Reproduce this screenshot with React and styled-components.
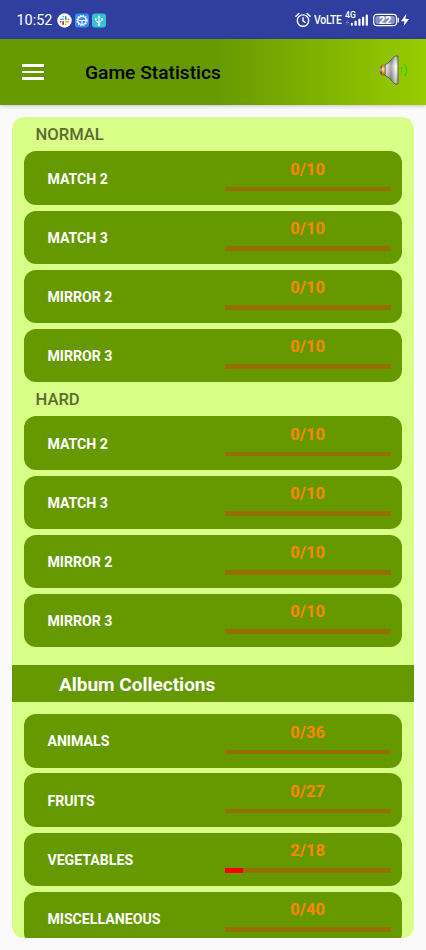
import styled, { createGlobalStyle } from 'styled-components';

const GlobalStyle = createGlobalStyle`
  * {
    box-sizing: border-box;
  }

  body {
    margin: 0;
    background: #fafafa;
    font-family: Roboto, 'Liberation Sans', sans-serif;
  }
`;

const Screen = styled.div`
  display: flex;
  flex-direction: column;
  width: 426px;
  height: 950px;
  overflow: hidden;
`;

const StatusBar = styled.div`
  display: flex;
  flex-shrink: 0;
  align-items: center;
  height: 39px;
  padding: 1px 16px 0;
  color: #fff;
  background: #303f9f;
`;

const Clock = styled.div`
  width: 41px;
  padding-left: 0.5px;
  font-size: 14.4px;
  white-space: nowrap;
`;

const AppIcons = styled.div`
  display: flex;
  gap: 3px;
  margin-right: auto;

  svg {
    display: block;
  }
`;

const SystemIcons = styled.div`
  display: flex;
  align-items: center;

  svg {
    display: block;
  }
`;

const Volte = styled.div`
  width: 31px;
  font-size: 12px;
  font-weight: 500;
  letter-spacing: -0.3px;
  transform: scaleX(0.87);
  transform-origin: left center;
`;

const Header = styled.header`
  position: relative;
  display: flex;
  flex-shrink: 0;
  align-items: center;
  height: 66px;
  padding: 0 15px 0 22px;
  background: linear-gradient(90deg, #669900 50%, #99cc00 100%);
  box-shadow: 0 1px 4px rgba(0, 0, 0, 0.22);
`;

const MenuButton = styled.button`
  display: flex;
  flex-direction: column;
  gap: 3.6px;
  width: 22.4px;
  padding: 0;
  border: 0;
  background: none;
`;

const MenuLine = styled.span`
  height: 2.7px;
  background: #fff;
`;

const HeaderTitle = styled.h1`
  flex: 1;
  margin: 0 0 0 40.6px;
  color: #000;
  font-size: 19.2px;
  font-weight: 500;
`;

const Speaker = styled.div`
  padding-bottom: 4px;

  svg {
    display: block;
  }
`;

const Panel = styled.main`
  flex-shrink: 0;
  width: 402px;
  height: 821px;
  margin: 12px 12px 0;
  padding-top: 0.3px;
  overflow: hidden;
  border-radius: 12px;
  background: #d9ff88;
`;

const GroupTitle = styled.h2`
  height: 34.2px;
  margin: 0;
  padding-left: 23.5px;
  color: #586c2f;
  font-size: 16.6px;
  font-weight: 500;
  line-height: 35px;
`;

const List = styled.div`
  display: flex;
  flex-direction: column;
  gap: 5.917px;
  padding: 0 12px;
`;

const Row = styled.div`
  display: flex;
  flex-shrink: 0;
  align-items: center;
  height: 53.25px;
  padding: 0 11.5px 0 23.4px;
  border-radius: 12px;
  background: #669900;
`;

const RowName = styled.div`
  flex: 1;
  padding-top: 1px;
  color: #fff;
  font-size: 14.15px;
  font-weight: 700;
`;

const Score = styled.div`
  align-self: flex-start;
  width: 165.6px;
  padding-top: 7.5px;
`;

const ScoreText = styled.div`
  height: 28px;
  color: #ff8800;
  font-size: 16.6px;
  font-weight: 700;
  line-height: 22px;
  text-align: center;
`;

const Track = styled.div`
  height: 4.5px;
  background: #937000;
`;

const Fill = styled.div`
  height: 100%;
  background: #ff0000;
`;

const Banner = styled.h2`
  height: 37.2px;
  margin: 18px 0 12px;
  padding-left: 47px;
  color: #fff;
  background: #669900;
  font-size: 19px;
  font-weight: 700;
  line-height: 39px;
`;

const modes = ['MATCH 2', 'MATCH 3', 'MIRROR 2', 'MIRROR 3'].map(name => ({
  name,
  done: 0,
  total: 10,
}));

const albums = [
  { name: 'ANIMALS', done: 0, total: 36 },
  { name: 'FRUITS', done: 0, total: 27 },
  { name: 'VEGETABLES', done: 2, total: 18 },
  { name: 'MISCELLANEOUS', done: 0, total: 40 },
];

const SlackIcon = () => (
  <svg width="15" height="15" viewBox="0 0 15 15">
    <circle cx="7.5" cy="7.5" r="7.2" fill="#fff" />
    <g fill="none" strokeWidth="1.6" strokeLinecap="round">
      <path d="M3.7 6.2h2.5" stroke="#36b5d8" />
      <path d="M6.2 3.5v.2" stroke="#36b5d8" />
      <path d="M8.8 3.7v2.5" stroke="#239a68" />
      <path d="M11.4 6.2h-.1" stroke="#239a68" />
      <path d="M8.8 8.8h2.5" stroke="#e5a520" />
      <path d="M8.8 11.4v-.1" stroke="#e5a520" />
      <path d="M6.2 8.8v2.5" stroke="#d0143a" />
      <path d="M3.6 8.8h.1" stroke="#d0143a" />
    </g>
  </svg>
);

const GearIcon = () => (
  <svg width="14" height="15" viewBox="0 0 14 15">
    <rect y=".5" width="14" height="14" rx="3" fill="#3b8cf5" />
    <circle cx="7" cy="7.5" r="5" fill="none" stroke="#fff" strokeWidth="1.3" strokeDasharray="1.5 1.12" />
    <circle cx="7" cy="7.5" r="4.1" fill="none" stroke="#fff" strokeWidth="1.3" />
    <path d="M3.5 7.5h7M7 7.5v3.6" stroke="#fff" strokeWidth="1.1" />
  </svg>
);

const UsbIcon = () => (
  <svg width="14" height="15" viewBox="0 0 14 15">
    <rect y=".5" width="14" height="14" rx="3" fill="#35c2d3" />
    <path d="M7 3.5v8M3.8 6.2v1.6L7 10M10.2 5.8v1.6L7 9.2" fill="none" stroke="#fff" strokeWidth="1" />
    <path d="M5.5 4.4L7 2.3l1.5 2.1z" fill="#fff" />
    <circle cx="7" cy="11.7" r="1.3" fill="#fff" />
    <circle cx="3.8" cy="6" r=".9" fill="#fff" />
    <path d="M9.4 5h1.6v1.6H9.4z" fill="#fff" />
  </svg>
);

const AlarmIcon = () => (
  <svg width="19" height="16" viewBox="0 0 19 16" fill="none" stroke="#fff" strokeWidth="1.4" strokeLinecap="round">
    <circle cx="8" cy="8.6" r="5.7" />
    <path d="M8 5.6v3.2l2 1.5M.9 4.2l3-2.7M15.1 4.2l-3-2.7" />
  </svg>
);

const SignalIcon = () => (
  <svg width="28" height="18" viewBox="0 0 28 18" fill="#fff">
    <text x="0" y="7.3" fontSize="8.6" fontWeight="500">4G</text>
    <path d="M2.2 9v1.8M2.2 12v1.8M.4 11.4h3.6" stroke="#7580c4" strokeWidth=".9" />
    <rect x="5.8" y="11.7" width="2" height="3" rx=".7" />
    <rect x="9.5" y="9.8" width="2.2" height="4.9" rx=".7" />
    <rect x="13.3" y="7.8" width="2.2" height="6.9" rx=".7" />
    <rect x="17" y="5.7" width="2.2" height="9" rx=".7" />
    <rect x="20.7" y="3.4" width="2.2" height="11.3" rx=".7" />
  </svg>
);

const BatteryIcon = () => (
  <svg width="37" height="16" viewBox="0 0 37 16">
    <rect x=".7" y="2.3" width="22.8" height="11.4" rx="3.2" fill="none" stroke="#fff" strokeWidth="1.2" />
    <rect x="2.3" y="3.9" width="19.6" height="8.2" rx="1.8" fill="#8790c8" />
    <path d="M25.2 6.2v3.8" stroke="#fff" strokeWidth="1.4" strokeLinecap="round" />
    <text x="12.1" y="12" fontSize="11.2" fontWeight="700" fill="#fff" textAnchor="middle">22</text>
    <path d="M33.4 1.8L28 9.2h3.5l-.9 5L36 7h-3.6z" fill="#fff" />
  </svg>
);

const SpeakerIcon = () => (
  <svg width="32" height="30" viewBox="0 0 32 30">
    <defs>
      <linearGradient id="cone" x1="0" y1="0" x2="0" y2="1">
        <stop offset="0" stopColor="#77777c" />
        <stop offset=".35" stopColor="#f4f4f4" />
        <stop offset=".6" stopColor="#d0d0d0" />
        <stop offset="1" stopColor="#808080" />
      </linearGradient>
      <linearGradient id="shade" x1="0" y1="0" x2="1" y2="0">
        <stop offset="0" stopColor="#fff" stopOpacity=".5" />
        <stop offset=".45" stopColor="#555" stopOpacity=".45" />
        <stop offset=".8" stopColor="#fff" stopOpacity=".5" />
        <stop offset="1" stopColor="#fff" stopOpacity=".1" />
      </linearGradient>
      <linearGradient id="ring" x1="0" y1="0" x2="0" y2="1">
        <stop offset="0" stopColor="#c96d05" />
        <stop offset=".4" stopColor="#ffe2a0" />
        <stop offset=".65" stopColor="#ffaf20" />
        <stop offset="1" stopColor="#a85500" />
      </linearGradient>
      <linearGradient id="back" x1="0" y1="0" x2="0" y2="1">
        <stop offset="0" stopColor="#333" />
        <stop offset=".45" stopColor="#aaa" />
        <stop offset="1" stopColor="#333" />
      </linearGradient>
    </defs>
    <path d="M3.6 10.4Q.6 10.6.6 15.2t3 4.4z" fill="url(#back)" />
    <path d="M3 9.8h3.6v10.6H3z" fill="url(#ring)" />
    <path d="M6.2 9.7C10 8.4 12.5 4 16 1h3v28h-3C12.5 26 10 21.8 6.2 20.5z" fill="url(#cone)" />
    <path d="M6.2 9.7C10 8.4 12.5 4 16 1h3v28h-3C12.5 26 10 21.8 6.2 20.5z" fill="url(#shade)" stroke="#55554f" strokeWidth=".9" />
    <path d="M22 11.8q2 3.4 0 6.8" fill="none" stroke="#30cc08" strokeWidth="1.2" strokeDasharray="2.5 .8" />
    <path d="M25.6 9q4 6.2 0 12.4" fill="none" stroke="#30cc08" strokeWidth="1.3" />
  </svg>
);

const StatRow = ({ name, done, total }) => (
  <Row>
    <RowName>{name}</RowName>
    <Score>
      <ScoreText>{`${done}/${total}`}</ScoreText>
      <Track>
        <Fill style={{ width: `${(done / total) * 100}%` }} />
      </Track>
    </Score>
  </Row>
);

const StatList = ({ items }) => (
  <List>
    {items.map(item => (
      <StatRow key={item.name} {...item} />
    ))}
  </List>
);

const App = () => {
  return (
    <>
      <GlobalStyle />
      <Screen>
        <StatusBar>
          <Clock>10:52</Clock>
          <AppIcons>
            <SlackIcon />
            <GearIcon />
            <UsbIcon />
          </AppIcons>
          <SystemIcons>
            <AlarmIcon />
            <Volte>VoLTE</Volte>
            <SignalIcon />
            <BatteryIcon />
          </SystemIcons>
        </StatusBar>
        <Header>
          <MenuButton aria-label="Menu">
            <MenuLine />
            <MenuLine />
            <MenuLine />
          </MenuButton>
          <HeaderTitle>Game Statistics</HeaderTitle>
          <Speaker>
            <SpeakerIcon />
          </Speaker>
        </Header>
        <Panel>
          <GroupTitle>NORMAL</GroupTitle>
          <StatList items={modes} />
          <GroupTitle>HARD</GroupTitle>
          <StatList items={modes} />
          <Banner>Album Collections</Banner>
          <StatList items={albums} />
        </Panel>
      </Screen>
    </>
  );
};

export default App;
